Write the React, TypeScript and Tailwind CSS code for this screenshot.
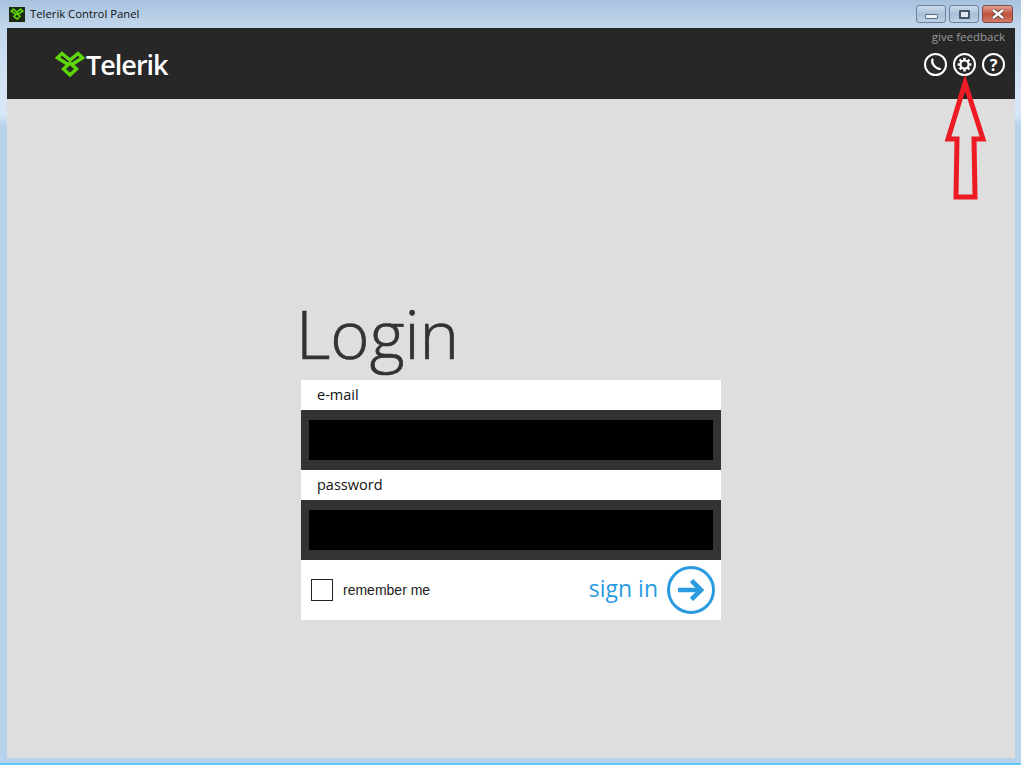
import React from "react";

const LogoMark: React.FC<{ className?: string }> = ({ className }) => (
  <svg viewBox="0 0 30 26" className={className} fill="none" stroke="#5fd60a" strokeWidth="3.4" strokeLinejoin="miter">
    <path d="M13 13.5 L2.5 6.8 L7 2.5 L15 9 L23 2.5 L27.5 6.8 L17 13.5" />
    <path d="M15 12 L21.5 18 L15 24 L8.5 18 Z" />
  </svg>
);

const WindowButtons = () => (
  <div className="flex gap-[3px] mr-[8px]">
    <button className="w-[30px] h-[18px] rounded-[3px] border border-[#6d8199] bg-gradient-to-b from-[#cfdcec] via-[#a9c0da] to-[#bcd0e6] flex items-center justify-center">
      <span className="w-[13px] h-[5px] mt-[5px] bg-[#eef3f8] border border-[#5d6f85] rounded-[1px]" />
    </button>
    <button className="w-[30px] h-[18px] rounded-[3px] border border-[#6d8199] bg-gradient-to-b from-[#cfdcec] via-[#a9c0da] to-[#bcd0e6] flex items-center justify-center">
      <span className="w-[11px] h-[9px] bg-[#dfe7f0] border-2 border-[#44566c] rounded-[1px]" />
    </button>
    <button className="w-[31px] h-[18px] rounded-[3px] border border-[#7c4a42] bg-gradient-to-b from-[#e2a195] via-[#c1503c] to-[#cf7a68] flex items-center justify-center">
      <svg viewBox="0 0 14 10" className="w-[14px] h-[10px]" stroke="#4a3a3a" strokeWidth="4">
        <path d="M2 1 L12 9 M12 1 L2 9" />
        <path d="M2 1 L12 9 M12 1 L2 9" stroke="#ffffff" strokeWidth="2.4" />
      </svg>
    </button>
  </div>
);

const CircleIcon: React.FC<{ children: React.ReactNode }> = ({ children }) => (
  <div className="w-[23px] h-[23px] rounded-full border-2 border-white flex items-center justify-center text-white">
    {children}
  </div>
);

const Field: React.FC<{ label: string }> = ({ label }) => (
  <>
    <div className="h-[30px] bg-white pl-[16px] flex items-center text-[14.5px] text-[#111]">{label}</div>
    <div className="h-[60px] bg-[#333333] px-[8px] py-[10px]">
      <div className="h-[40px] bg-black" />
    </div>
  </>
);

export default function App() {
  return (
    <div className="relative w-[1021px] h-[765px] overflow-hidden flex flex-col bg-[linear-gradient(to_bottom,#a8c3df_0px,#c3d7ec_28px,#d8e7f6_100px,#d8e7f6_115px,#b9d2ec_125px,#b9d2ec_100%)] font-['Open_Sans',sans-serif]">
      {/* title bar */}
      <div className="h-[28px] shrink-0 flex items-center justify-between pl-[9px]">
        <div className="flex items-center gap-[5px]">
          <div className="w-[16px] h-[15px] bg-[#1c2a14] flex items-center justify-center">
            <LogoMark className="w-[14px] h-[12px]" />
          </div>
          <span className="text-[11.3px] text-[#111]">Telerik Control Panel</span>
        </div>
        <WindowButtons />
      </div>

      <div className="flex-1 flex flex-col mx-[6px] ml-[7px] mb-[5px] bg-[#dedede]">
        {/* header */}
        <header className="h-[71px] shrink-0 bg-[#272727] flex justify-between pl-[48px] pr-[10px]">
          <div className="flex items-center gap-[1px] pt-[2px]">
            <LogoMark className="w-[30px] h-[26px] mb-[2px]" />
            <span className="text-[27px] font-semibold text-white tracking-[-1px] leading-none">Telerik</span>
          </div>
          <div className="flex flex-col items-end pt-[2px]">
            <span className="text-[11.5px] leading-[14px] text-[#9a9a9a]">give feedback</span>
            <div className="flex gap-[6px] mt-[9px]">
              <CircleIcon>
                <svg viewBox="0 0 19 19" className="w-[19px] h-[19px]" fill="none" stroke="currentColor" strokeWidth="2.2" strokeLinecap="round">
                  <path d="M6.5 4.5 C5 8 9 13.5 14 14" />
                </svg>
              </CircleIcon>
              <CircleIcon>
                <svg viewBox="0 0 24 24" className="w-[15px] h-[15px]" fill="none" stroke="currentColor" strokeWidth="4">
                  <circle cx="12" cy="12" r="6.5" strokeWidth="3.4" />
                  <path d="M12 1v5M12 18v5M1 12h5M18 12h5M4.2 4.2l3.5 3.5M16.3 16.3l3.5 3.5M4.2 19.8l3.5-3.5M16.3 7.7l3.5-3.5" />
                </svg>
              </CircleIcon>
              <CircleIcon>
                <span className="text-[16px] font-bold leading-none">?</span>
              </CircleIcon>
            </div>
          </div>
        </header>

        {/* login */}
        <main className="flex-1 flex flex-col items-center pt-[187px]">
          <div className="w-[420px]">
            <h1 className="text-[67px] leading-[94px] font-light [-webkit-text-stroke:0.7px_#333333] text-[#333333] -ml-[5px]">Login</h1>
            <Field label="e-mail" />
            <Field label="password" />
            <div className="h-[60px] bg-white flex items-center justify-between pl-[10px] pr-[6px]">
              <label className="flex items-center gap-[10px]">
                <span className="w-[22px] h-[22px] border-[1.5px] border-[#222] bg-white" />
                <span className="font-['Liberation_Sans',sans-serif] text-[14px] text-[#222]">remember me</span>
              </label>
              <button className="flex items-center gap-[9px] text-[#2a9be0]">
                <span className="text-[23px] mb-[3px]">sign in</span>
                <span className="w-[48px] h-[48px] rounded-full border-[3.5px] border-[#2a9be0] flex items-center justify-center">
                  <svg viewBox="0 0 26 22" className="w-[26px] h-[22px]" fill="none" stroke="currentColor" strokeWidth="4.6">
                    <path d="M0 11 H23 M13.5 1.5 L23 11 L13.5 20.5" />
                  </svg>
                </span>
              </button>
            </div>
          </div>
        </main>
      </div>
      <div className="h-[2px] shrink-0 bg-[#5cc8ee]" />

      {/* red annotation arrow */}
      <svg className="absolute left-[940px] top-[74px] w-[52px] h-[130px]" viewBox="0 0 52 130" fill="none" stroke="#ed1c24" strokeWidth="5">
        <path d="M25 9 L8 65 L17 65 L16 123 L35 123 L34 65 L43 65 Z" />
      </svg>
    </div>
  );
}
